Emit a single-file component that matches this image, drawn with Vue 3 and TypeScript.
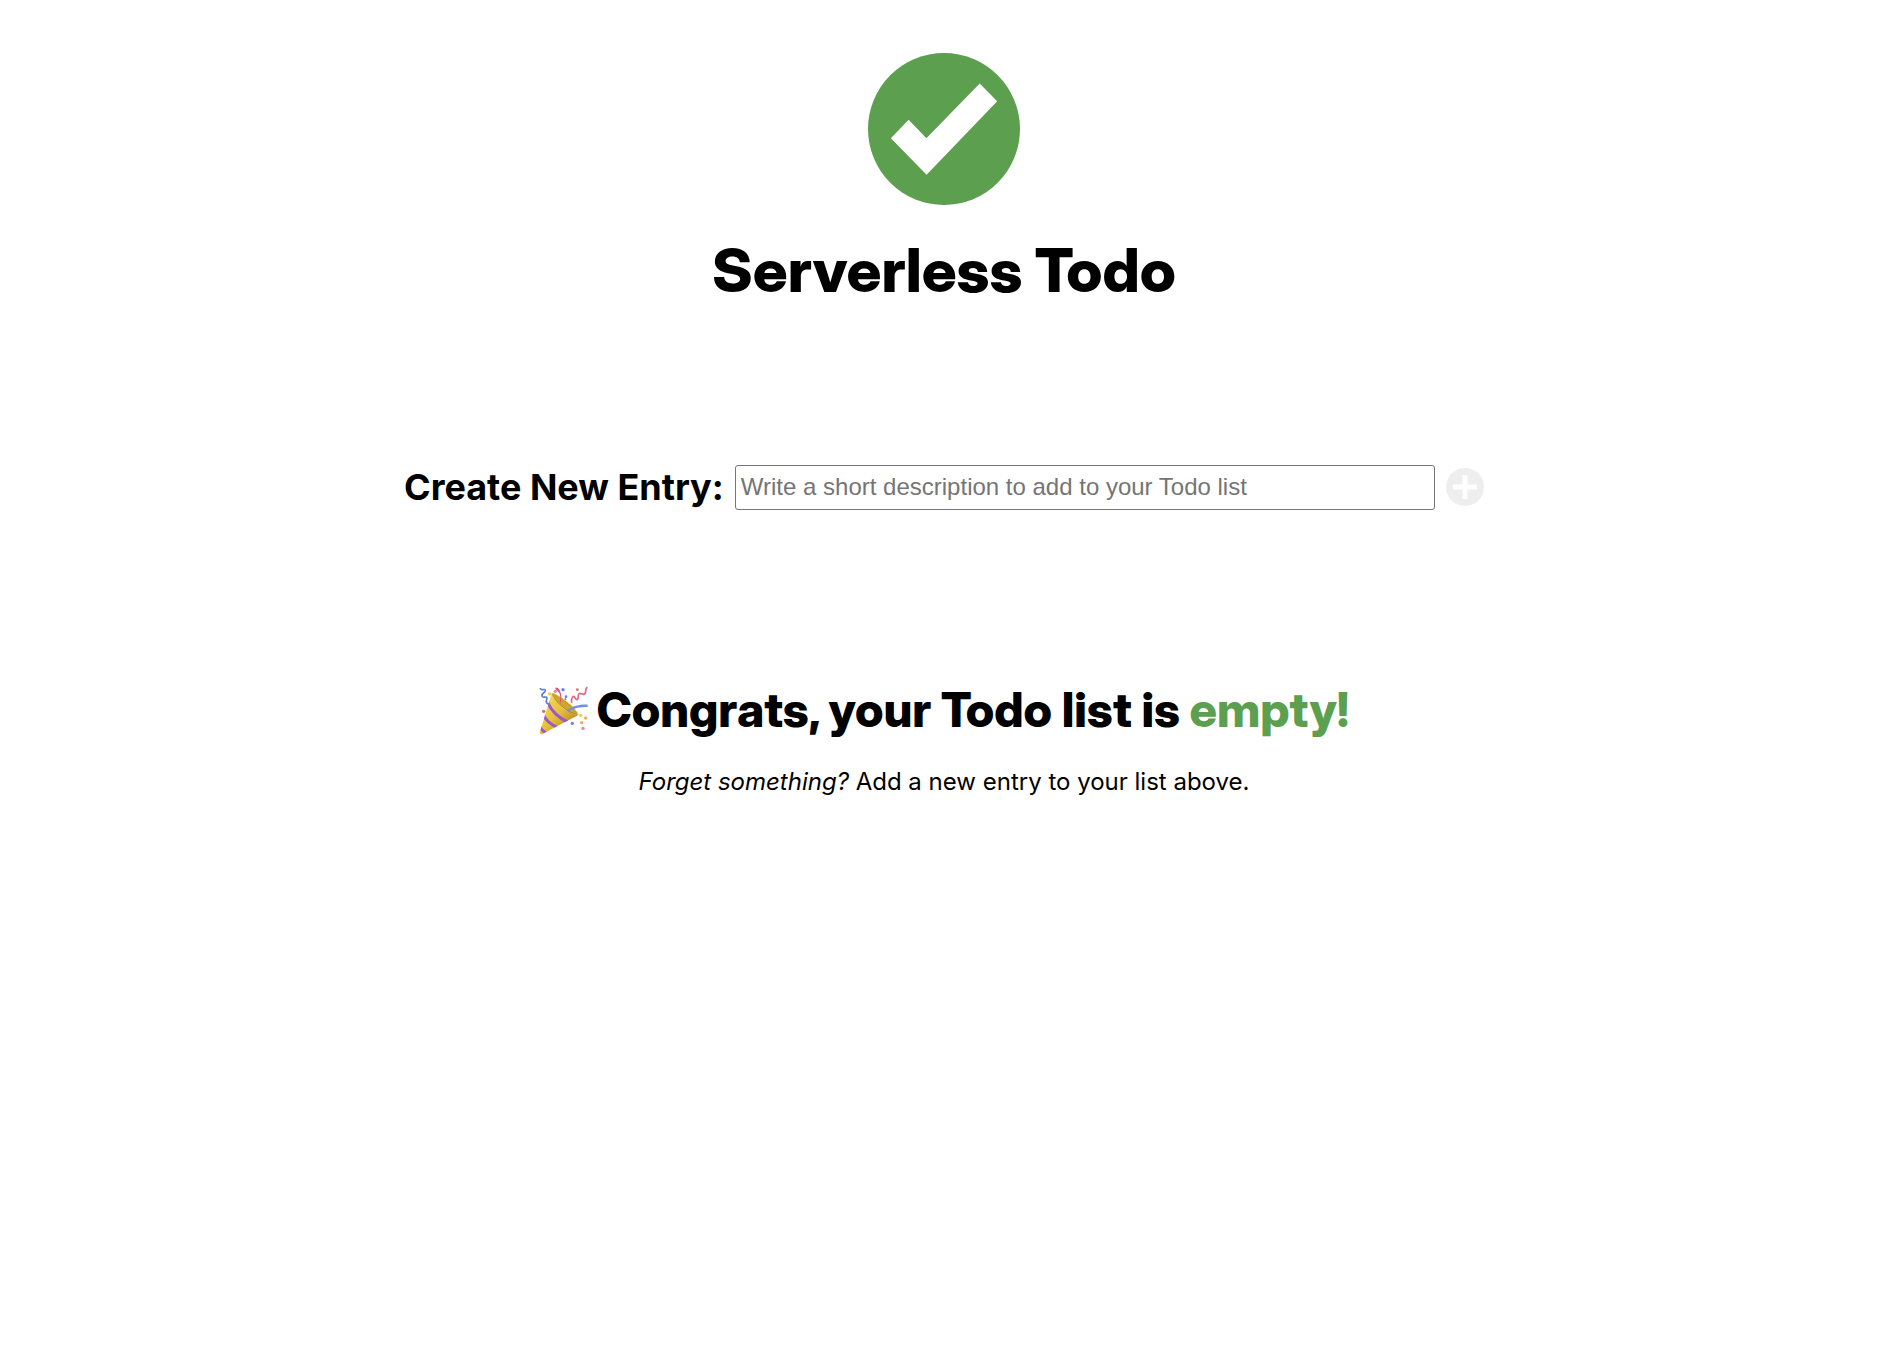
<script setup lang="ts">
import { ref } from 'vue'

const description = ref('')
</script>

<template>
  <main class="page">
    <header class="header">
      <svg class="logo" viewBox="0 0 152 152" aria-hidden="true">
        <circle cx="76" cy="76" r="76" fill="#5c9f4f" />
        <path d="M111.7 30.4 129.2 48.3 58.6 121.8 22.9 85.2 40.6 66.8 58.4 85.2Z" fill="#fff" />
      </svg>
      <h1 class="title">Serverless Todo</h1>
    </header>

    <form class="entry" @submit.prevent>
      <label class="entry-label" for="description">Create New Entry:</label>
      <input
        id="description"
        v-model="description"
        class="entry-input"
        type="text"
        placeholder="Write a short description to add to your Todo list"
      />
      <button class="entry-add" type="submit" aria-label="Add entry" :disabled="!description">
        <svg class="entry-icon" viewBox="0 0 38 38" aria-hidden="true">
          <circle cx="19" cy="19" r="19" fill="currentColor" />
          <path d="M7 19H31M19 7V31" stroke="#fff" stroke-width="5" />
        </svg>
      </button>
    </form>

    <section class="empty">
      <h2 class="empty-title">
        <svg class="party" viewBox="40 30 150 150" aria-hidden="true">
          <defs>
            <linearGradient id="cone" x1="0" y1="0" x2="1" y2="1">
              <stop offset="0.2" stop-color="#f0d45c" />
              <stop offset="0.5" stop-color="#e6be38" />
              <stop offset="0.8" stop-color="#b98d22" />
            </linearGradient>
            <clipPath id="cone-clip">
              <path d="M78 55C94 88 124 115 157 121L50 177Q41 180 43 170Z" />
            </clipPath>
          </defs>
          <path d="M78 55C94 88 124 115 157 121L50 177Q41 180 43 170Z" fill="url(#cone)" />
          <g clip-path="url(#cone-clip)" fill="none" stroke="#9a58cc" stroke-width="9">
            <path d="M66 82Q82 120 128 142" />
            <path d="M54 122Q66 145 96 158" />
            <path d="M42 154Q50 170 67 176" />
          </g>
          <path d="M78 55C90 53 150 95 158 120C134 121 88 85 78 55Z" fill="#a98224" />
          <path d="M81 58C96 60 145 98 155 118C130 113 92 86 81 58Z" fill="#cfa437" />
          <path d="M78 55C90 53 150 95 158 120" fill="none" stroke="#ebcb51" stroke-width="3" />
          <path d="M104 88C113 62 101 34 90 38C86 43 98 47 102 56C106 66 102 76 104 88Z" fill="#dc5270" />
          <path d="M125 106C143 92 164 88 186 89V96C164 96 146 98 128 110Z" fill="#6f90e8" />
          <path d="M44 39C44 50 60 38 59 47C57 57 44 54 50 65C57 70 69 59 62 77C60 87 67 85 69 88" fill="none" stroke="#5f7fd6" stroke-width="5" />
          <path d="M138 84C135 70 143 58 148 68C153 78 158 75 158 62C159 49 167 59 174 58C185 56 175 44 185 36" fill="none" stroke="#da6a86" stroke-width="5" />
          <g fill="#5f86e8">
            <circle cx="112" cy="44" r="5" />
            <circle cx="121" cy="65" r="4" />
            <circle cx="140" cy="145" r="5" />
          </g>
          <g fill="#e983b7">
            <circle cx="89" cy="49" r="5" />
            <circle cx="172" cy="160" r="5" />
          </g>
          <g fill="#dd6b76">
            <circle cx="155" cy="44" r="4" />
            <circle cx="119" cy="72" r="3" />
            <circle cx="54" cy="109" r="5" />
          </g>
          <g fill="#f1d348">
            <circle cx="72" cy="57" r="5" />
            <circle cx="165" cy="121" r="5" />
          </g>
          <g fill="#edae55">
            <circle cx="180" cy="129" r="5" />
            <circle cx="168" cy="143" r="5" />
          </g>
        </svg>
        <span>Congrats, your Todo list is <span class="accent">empty!</span></span>
      </h2>
      <p class="empty-hint"><em>Forget something?</em> Add a new entry to your list above.</p>
    </section>
  </main>
</template>

<style>
body {
  margin: 0;
  background: #fff;
}
</style>

<style scoped>
.page {
  box-sizing: border-box;
  max-width: 1128px;
  margin: 0 auto;
  padding: 53px 24px;
  color: #000;
  font-family: Inter, "Liberation Sans", sans-serif;
  font-size: 24px;
  line-height: 36px;
}

.header {
  display: flex;
  flex-direction: column;
  align-items: center;
  gap: 28px;
}

.logo {
  width: 152px;
  height: 152px;
}

.title,
.empty-title {
  margin: 0;
  font-family: "Inter Display", "Inter Tight", Inter, sans-serif;
  font-weight: 800;
}

.title {
  font-size: 61px;
  line-height: 74px;
}

.entry {
  display: flex;
  align-items: center;
  gap: 11px;
  margin-top: 158px;
}

.entry-label {
  padding-bottom: 1px;
  font-size: 36px;
  font-weight: 700;
  line-height: 44px;
}

.entry-input {
  box-sizing: border-box;
  flex: 1;
  min-width: 0;
  height: 45px;
  padding: 0 5px 1px;
  border: 1px solid #767676;
  border-radius: 3px;
  background: #fff;
  color: #000;
  font-family: "Liberation Sans", Arial, sans-serif;
  font-size: 24px;
}

.entry-input::placeholder {
  color: #757575;
}

.entry-add {
  display: flex;
  padding: 0 0 1px;
  border: 0;
  background: none;
  color: #5c9f4f;
}

.entry-add:disabled {
  color: #eee;
}

.entry-icon {
  width: 38px;
  height: 38px;
}

.empty {
  margin-top: 170px;
  text-align: center;
}

.empty-title {
  display: flex;
  align-items: center;
  justify-content: center;
  gap: 8px;
  font-size: 48px;
  line-height: 60px;
}

.party {
  flex: none;
  width: 50px;
  height: 50px;
}

.accent {
  color: #5c9f4f;
}

.empty-hint {
  margin: 24px 0 0;
}
</style>
